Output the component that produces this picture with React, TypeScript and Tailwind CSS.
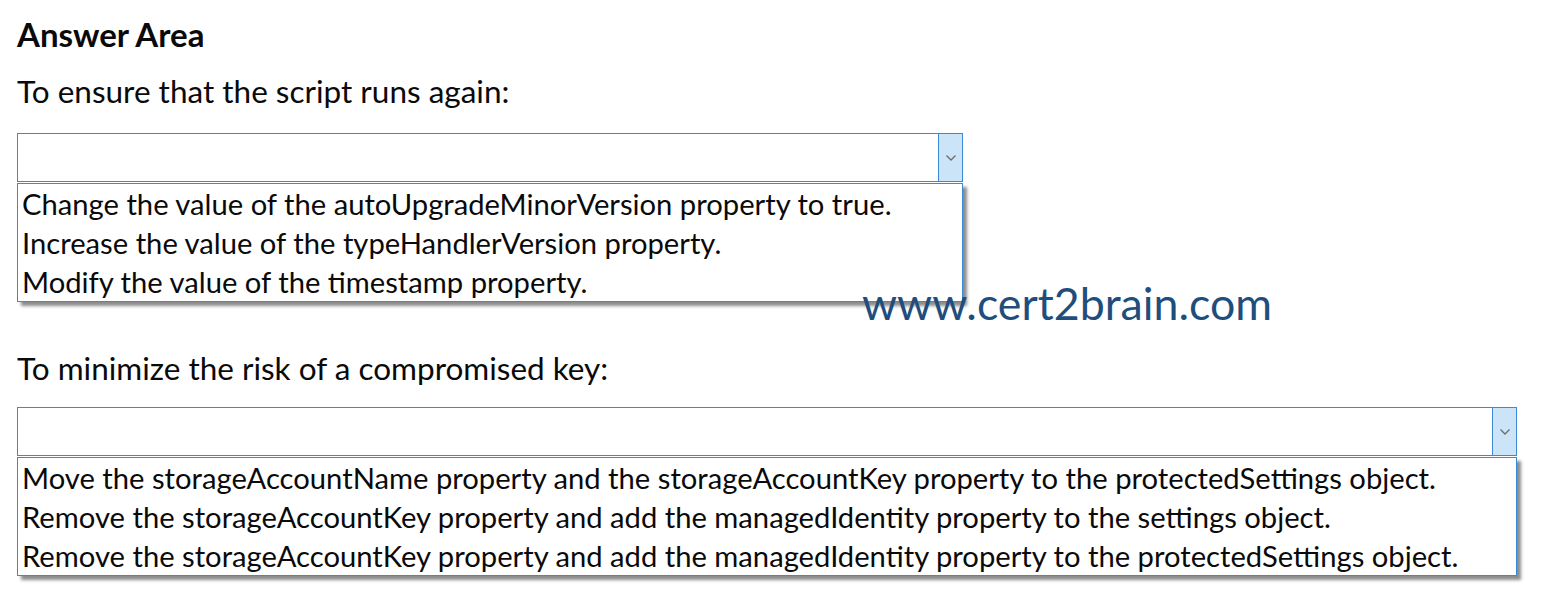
import React from 'react'

const font = { fontFamily: 'Lato, "Open Sans", sans-serif' }

function Chevron() {
  return (
    <svg width="12" height="8" viewBox="0 0 12 8" className="text-[#6b6b6b]">
      <path d="M1.5 1.5 L6 6 L10.5 1.5" fill="none" stroke="currentColor" strokeWidth="1.3" />
    </svg>
  )
}

function Dropdown({ width, options }: { width: string; options: string[] }) {
  return (
    <div className={width}>
      <div className="flex h-[49px] border border-[#3b8ad8] bg-white">
        <div className="flex-1" />
        <div className="flex w-[24px] items-center justify-center border-l border-[#3b8ad8] bg-[#cce4f7]">
          <Chevron />
        </div>
      </div>
      <div className="mt-px border border-[#3b8ad8] bg-white shadow-[4px_4px_3px_rgba(0,0,0,0.45)]">
        {options.map(o => (
          <div key={o} className="h-[39px] pl-[4px] text-[29.2px] leading-[39px] text-[#0a0a0a]">
            {o}
          </div>
        ))}
      </div>
    </div>
  )
}

export default function App() {
  return (
    <div className="relative h-[605px] w-[1548px] bg-white pl-[17px] pt-[14px] text-[#0a0a0a]" style={font}>
      <h1 className="text-[33px] font-bold leading-[40px]">Answer Area</h1>
      <p className="mt-[17px] text-[31.5px] leading-[40px]">To ensure that the script runs again:</p>
      <div className="mt-[22px]">
        <Dropdown
          width="w-[946px]"
          options={[
            'Change the value of the autoUpgradeMinorVersion property to true.',
            'Increase the value of the typeHandlerVersion property.',
            'Modify the value of the timestamp property.',
          ]}
        />
      </div>
      <p className="mt-[46px] text-[31.5px] leading-[40px]">To minimize the risk of a compromised key:</p>
      <div className="mt-[19px]">
        <Dropdown
          width="w-[1500px]"
          options={[
            'Move the storageAccountName property and the storageAccountKey property to the protectedSettings object.',
            'Remove the storageAccountKey property and add the managedIdentity property to the settings object.',
            'Remove the storageAccountKey property and add the managedIdentity property to the protectedSettings object.',
          ]}
        />
      </div>
      <div className="absolute left-[862px] top-[278px] text-[44.7px] leading-[50px] text-[#1f4e7d]">
        www.cert2brain.com
      </div>
    </div>
  )
}
